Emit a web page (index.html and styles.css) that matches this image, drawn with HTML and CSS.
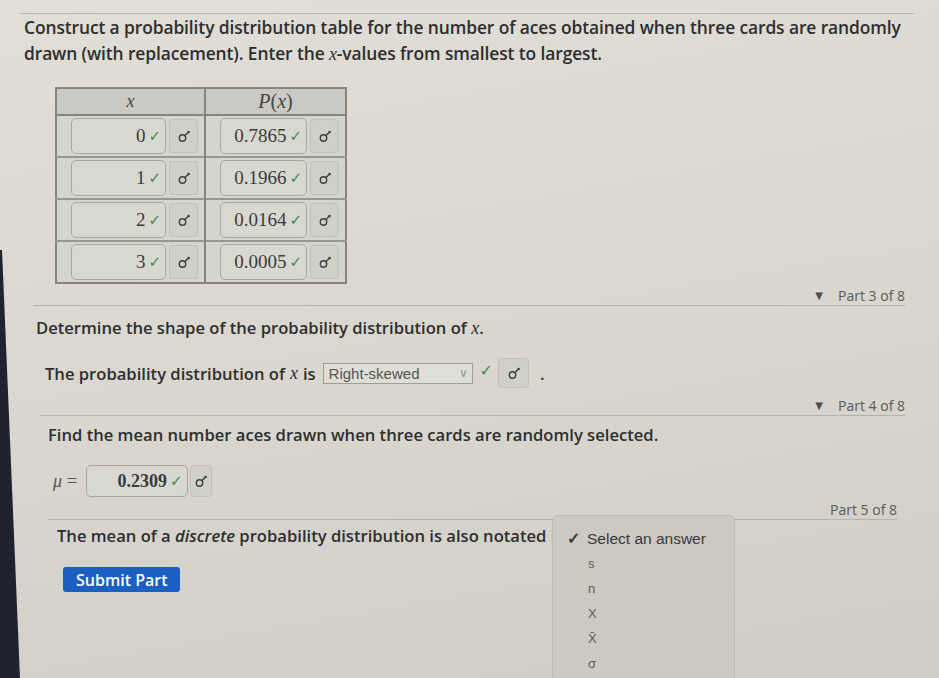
FILE: index.html
```html
<!DOCTYPE html>
<html lang="en">
<head>
    <meta charset="UTF-8">
    <meta name="viewport" content="width=device-width, initial-scale=1.0">
    <title>Part 5 of 8</title>
    <link rel="stylesheet" href="styles.css">
</head>
<body>
<div class="page">
    <div class="intro">
        <p class="lead">Construct a probability distribution table for the number of aces obtained when three cards are randomly drawn (with replacement). Enter the <i class="m">x</i>-values from smallest to largest.</p>
        <table class="dist">
            <tr>
                <th><i class="m">x</i></th>
                <th class="px"><i class="m">P</i>(<i class="m">x</i>)</th>
            </tr>
            <tr>
                <td><div class="cell"><span class="answer">0<span class="ok">&#10003;</span></span><span class="tool"><svg viewBox="0 0 14 14"><circle cx="5.5" cy="9" r="3.2"/><path d="M7.8 6.7 L11 3.6"/><circle class="dot" cx="11.6" cy="3" r="1.3"/></svg></span></div></td>
                <td><div class="cell"><span class="answer">0.7865<span class="ok">&#10003;</span></span><span class="tool"><svg viewBox="0 0 14 14"><circle cx="5.5" cy="9" r="3.2"/><path d="M7.8 6.7 L11 3.6"/><circle class="dot" cx="11.6" cy="3" r="1.3"/></svg></span></div></td>
            </tr>
            <tr>
                <td><div class="cell"><span class="answer">1<span class="ok">&#10003;</span></span><span class="tool"><svg viewBox="0 0 14 14"><circle cx="5.5" cy="9" r="3.2"/><path d="M7.8 6.7 L11 3.6"/><circle class="dot" cx="11.6" cy="3" r="1.3"/></svg></span></div></td>
                <td><div class="cell"><span class="answer">0.1966<span class="ok">&#10003;</span></span><span class="tool"><svg viewBox="0 0 14 14"><circle cx="5.5" cy="9" r="3.2"/><path d="M7.8 6.7 L11 3.6"/><circle class="dot" cx="11.6" cy="3" r="1.3"/></svg></span></div></td>
            </tr>
            <tr>
                <td><div class="cell"><span class="answer">2<span class="ok">&#10003;</span></span><span class="tool"><svg viewBox="0 0 14 14"><circle cx="5.5" cy="9" r="3.2"/><path d="M7.8 6.7 L11 3.6"/><circle class="dot" cx="11.6" cy="3" r="1.3"/></svg></span></div></td>
                <td><div class="cell"><span class="answer">0.0164<span class="ok">&#10003;</span></span><span class="tool"><svg viewBox="0 0 14 14"><circle cx="5.5" cy="9" r="3.2"/><path d="M7.8 6.7 L11 3.6"/><circle class="dot" cx="11.6" cy="3" r="1.3"/></svg></span></div></td>
            </tr>
            <tr>
                <td><div class="cell"><span class="answer">3<span class="ok">&#10003;</span></span><span class="tool"><svg viewBox="0 0 14 14"><circle cx="5.5" cy="9" r="3.2"/><path d="M7.8 6.7 L11 3.6"/><circle class="dot" cx="11.6" cy="3" r="1.3"/></svg></span></div></td>
                <td><div class="cell"><span class="answer">0.0005<span class="ok">&#10003;</span></span><span class="tool"><svg viewBox="0 0 14 14"><circle cx="5.5" cy="9" r="3.2"/><path d="M7.8 6.7 L11 3.6"/><circle class="dot" cx="11.6" cy="3" r="1.3"/></svg></span></div></td>
            </tr>
        </table>
    </div>

    <div class="part part-3">
        <div class="part-head"><span class="arrow">&#9660;</span>Part 3 of 8</div>
        <p class="q">Determine the shape of the probability distribution of <i class="m">x</i>.</p>
        <div class="line">
            The probability distribution of <i class="m">x</i> is
            <span class="select">Right-skewed<span class="chev">&#8744;</span></span>
            <span class="ok big">&#10003;</span>
            <span class="tool tall"><svg viewBox="0 0 14 14"><circle cx="5.5" cy="9" r="3.2"/><path d="M7.8 6.7 L11 3.6"/><circle class="dot" cx="11.6" cy="3" r="1.3"/></svg></span>
            <span class="dotend">.</span>
        </div>
    </div>

    <div class="part part-4">
        <div class="part-head"><span class="arrow">&#9660;</span>Part 4 of 8</div>
        <p class="q">Find the mean number aces drawn when three cards are randomly selected.</p>
        <div class="line mean">
            <span class="mu"><i class="m">&mu;</i> =</span>
            <span class="answer">0.2309<span class="ok">&#10003;</span></span>
            <span class="tool"><svg viewBox="0 0 14 14"><circle cx="5.5" cy="9" r="3.2"/><path d="M7.8 6.7 L11 3.6"/><circle class="dot" cx="11.6" cy="3" r="1.3"/></svg></span>
        </div>
    </div>

    <div class="part part-5">
        <div class="part-head">Part 5 of 8</div>
        <p class="q">The mean of a <i>discrete</i> probability distribution is also notated by</p>
        <button class="submit">Submit Part</button>
    </div>

    <ul class="menu">
        <li class="picked"><span class="tick">&#10003;</span>Select an answer</li>
        <li>s</li>
        <li>n</li>
        <li>X</li>
        <li>X&#772;</li>
        <li>&sigma;</li>
    </ul>
</div>
</body>
</html>
```

FILE: styles.css
```css
body {
    margin: 0;
    background: linear-gradient(170deg, #e0ded6 0%, #d8d6ce 55%, #cfcdc5 100%);
    font-family: "Open Sans", "DejaVu Sans", sans-serif;
    color: #2e2e2e;
    height: 678px;
    overflow: hidden;
}
.page {
    position: relative;
    height: 678px;
    padding: 13px 24px 0 24px;
    box-sizing: border-box;
}
/* dark monitor bezel on the left */
.page::before {
    content: "";
    position: absolute;
    left: 0;
    top: 0;
    width: 24px;
    height: 678px;
    background: #1f2330;
    clip-path: polygon(0 250px, 2px 250px, 20px 678px, 0 678px);
}
p {
    margin: 0;
}
.m {
    font-family: "Liberation Serif", serif;
    font-style: italic;
    font-weight: normal;
}
.intro {
    border-top: 1px solid #b9b8b0;
    margin-left: -4px;
    padding-left: 4px;
}
.lead {
    font-size: 17.4px;
    font-weight: 600;
    line-height: 26px;
    letter-spacing: -0.1px;
}
.lead .m {
    font-size: 18px;
}
.dist {
    margin: 20px 0 0 31px;
    border-collapse: collapse;
    border: 2px solid #85847f;
    background: #d5d4cd;
}
.dist th {
    height: 25px;
    background: #cac9c3;
    font-weight: normal;
    font-family: "Liberation Serif", serif;
    font-size: 18px;
    color: #444;
    border-bottom: 2px solid #85847f;
    padding: 0;
}
.dist th.px {
    font-size: 20px;
}
.dist th + th,
.dist td + td {
    border-left: 2px solid #85847f;
}
.dist td {
    height: 40px;
    padding: 0 6px 0 14px;
    border-top: 2px solid #97968f;
}
.cell {
    display: flex;
    align-items: center;
    gap: 3px;
}
.dist td:first-child .cell .answer {
    width: 95px;
}
.dist td + td .cell .answer {
    width: 87px;
}
.answer {
    display: inline-flex;
    justify-content: flex-end;
    align-items: center;
    box-sizing: border-box;
    height: 36px;
    padding-right: 4px;
    background: #d9d8d0;
    border: 1px solid #a7a69f;
    border-radius: 5px;
    font-family: "Liberation Serif", serif;
    font-size: 19px;
    color: #3c3c3c;
}
.ok {
    color: #3d8a4e;
    font-family: "DejaVu Sans", sans-serif;
    font-size: 15px;
    font-weight: bold;
    margin-left: 3px;
}
.tool {
    display: inline-flex;
    align-items: center;
    justify-content: center;
    width: 29px;
    height: 34px;
    box-sizing: border-box;
    background: #d1d0c8;
    border: 1px solid #c2c1b9;
    border-radius: 4px;
}
.tool svg {
    width: 14px;
    height: 14px;
    fill: none;
    stroke: #3e3e3e;
    stroke-width: 1.4;
}
.tool svg .dot {
    fill: #3e3e3e;
    stroke: none;
}
.part-head {
    display: flex;
    justify-content: flex-end;
    align-items: center;
    height: 20px;
    margin-right: 10px;
    border-bottom: 1px solid #b4b3ab;
    font-size: 14px;
    color: #5a5a58;
}
.arrow {
    font-size: 10px;
    color: #4e4e4e;
    margin-right: 15px;
}
.q {
    font-size: 16.6px;
    font-weight: 600;
    line-height: 22px;
}
.q .m {
    font-size: 18px;
}
.part-3 {
    margin: 1px 0 0 9px;
}
.part-3 .q {
    margin: 11px 0 0 3px;
}
.part-3 .line {
    margin: 19px 0 0 12px;
}
.line {
    display: flex;
    align-items: center;
    gap: 5px;
    height: 30px;
    font-size: 16.6px;
    font-weight: 600;
}
.line .m {
    font-size: 18px;
}
.select {
    display: inline-flex;
    align-items: center;
    justify-content: space-between;
    width: 150px;
    height: 21px;
    box-sizing: border-box;
    margin-left: 2px;
    padding: 0 4px 0 5px;
    background: #dfded6;
    border: 1px solid #9e9d96;
    font-family: "Liberation Sans", sans-serif;
    font-weight: normal;
    font-size: 15px;
    color: #555;
}
.chev {
    color: #8a96a8;
    font-size: 12px;
}
.ok.big {
    font-size: 16px;
    margin: -6px 0 0 2px;
}
.tool.tall {
    width: 31px;
    height: 30px;
}
.dotend {
    margin-left: 6px;
}
.part-4 {
    margin: 7px 0 0 16px;
}
.part-4 .q {
    margin: 8px 0 0 8px;
}
.mean {
    margin: 19px 0 0 13px;
    height: 32px;
    gap: 2px;
}
.mu {
    font-family: "Liberation Serif", serif;
    font-weight: normal;
    font-size: 19px;
    color: #555;
    margin-right: 6px;
}
.mu .m {
    font-size: 18px;
}
.mean .answer {
    width: 102px;
    height: 32px;
    font-size: 18px;
}
.mean .tool {
    width: 22px;
    height: 32px;
}
.part-5 {
    margin: 2px 0 0 24px;
}
.part-5 .part-head {
    margin-right: 18px;
}
.part-5 .q {
    margin: 5px 0 0 9px;
    white-space: nowrap;
}
.submit {
    margin: 20px 0 0 15px;
    height: 25px;
    padding: 0 13px;
    border: none;
    border-radius: 3px;
    background: #1c5fc2;
    color: #fff;
    font-family: "Open Sans", sans-serif;
    font-weight: 600;
    font-size: 16px;
}
/* open dropdown list */
.menu {
    position: absolute;
    z-index: 2;
    left: 552px;
    top: 515px;
    width: 183px;
    height: 180px;
    margin: 0;
    padding: 10px 0 0 0;
    box-sizing: border-box;
    list-style: none;
    background: #ccc9c2;
    border: 1px solid #bfbcb5;
    border-radius: 6px 6px 0 0;
    font-family: "Liberation Sans", sans-serif;
    font-size: 13px;
    color: #5c5c5c;
}
.menu li {
    height: 25px;
    line-height: 25px;
    padding-left: 35px;
}
.menu li.picked {
    position: relative;
    font-size: 15.5px;
    color: #3a3a3a;
    padding-left: 34px;
}
.tick {
    position: absolute;
    left: 14px;
    font-weight: bold;
}
```
